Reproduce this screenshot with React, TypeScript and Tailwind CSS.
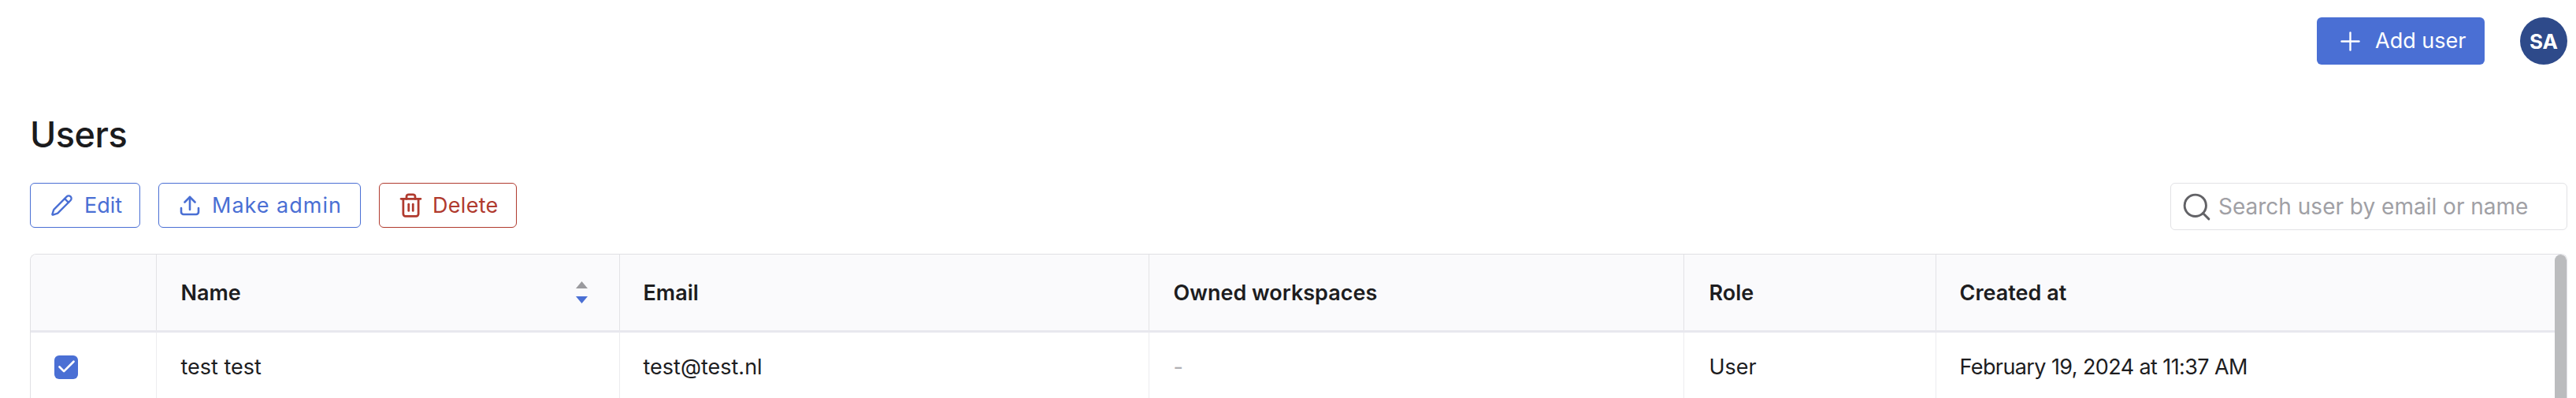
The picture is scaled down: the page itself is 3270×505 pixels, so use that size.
import { Pencil, Trash2, Search, Check } from "lucide-react";

const font = "font-['Inter','Liberation_Sans',sans-serif]";

function Upload() {
  return (
    <svg width="26" height="26" viewBox="0 0 26 26" fill="none" stroke="currentColor" strokeWidth="2.6" strokeLinecap="round" strokeLinejoin="round">
      <path d="M2 16v5a3 3 0 0 0 3 3h16a3 3 0 0 0 3-3v-5" />
      <path d="M13 18V2" />
      <path d="M6.5 8.5 13 2l6.5 6.5" />
    </svg>
  );
}

function PlusIcon() {
  return (
    <svg width="25" height="25" viewBox="0 0 25 25" fill="none" stroke="currentColor" strokeWidth="2.4" strokeLinecap="round">
      <path d="M12.5 1.5v22" />
      <path d="M1.5 12.5h22" />
    </svg>
  );
}

export default function App() {
  return (
    <div className={`${font} h-[505px] w-[3270px] overflow-hidden bg-white pl-[38px] pr-[11px] pt-[22px] text-[#1d1d1f]`}>
      <div className="flex items-center justify-end gap-[45px]">
        <button className="flex h-[60px] w-[213px] items-center gap-[19px] rounded-[6px] bg-[#4a6fd4] pl-[30px] text-[27px] text-white">
          <PlusIcon />
          <span>Add user</span>
        </button>
        <div className="flex h-[60px] w-[60px] items-center justify-center rounded-full bg-[#2e4a8a] text-[26px] font-bold text-white">SA</div>
      </div>

      <h1 className="mt-[63px] h-[52px] text-[45px] font-medium leading-[52px] tracking-[-0.5px] text-[#1b1b1d]">Users</h1>

      <div className="mt-[35px] flex items-start justify-between">
        <div className="flex items-center gap-[23px] text-[27px]">
          <button className="flex h-[57px] w-[140px] items-center gap-[14px] rounded-[6px] border border-[#4a6fd4] pl-[25px] text-[#4a6fd4]">
            <Pencil size={29} strokeWidth={2} />
            <span className="pt-[2px]">Edit</span>
          </button>
          <button className="flex h-[57px] w-[257px] items-center gap-[15px] rounded-[6px] border border-[#4a6fd4] pl-[26px] text-[#4a6fd4]">
            <Upload />
            <span className="pt-[2px] tracking-[1px]">Make admin</span>
          </button>
          <button className="flex h-[57px] w-[175px] items-center gap-[11px] rounded-[6px] border border-[#b03a2e] pl-[23px] text-[#b03a2e]">
            <Trash2 size={33} strokeWidth={2} />
            <span className="pt-[2px] tracking-[0.3px]">Delete</span>
          </button>
        </div>
        <div className="flex h-[60px] w-[504px] items-center gap-[7px] rounded-[6px] border border-[#e2e2e5] pl-[12px] text-[#626266]">
          <Search size={41} strokeWidth={1.7} />
          <span className="whitespace-nowrap text-[28px] text-[#a0a0a5]">Search user by email or name</span>
        </div>
      </div>

      <div className="relative mt-[30px] overflow-hidden rounded-t-[8px] border-x border-t border-[#e0e0e4]">
        <table className="w-full table-fixed border-collapse text-left text-[27px]">
          <colgroup>
            <col className="w-[159px]" />
            <col className="w-[588px]" />
            <col className="w-[672px]" />
            <col className="w-[679px]" />
            <col className="w-[320px]" />
            <col />
          </colgroup>
          <thead>
            <tr className="h-[97px] border-b-[3px] border-[#e8e8ee] bg-[#fafafc] text-[27px] font-semibold">
              <th className="border-r border-[#e3e3e6]"></th>
              <th className="border-r border-[#e3e3e6] pl-[31px] pr-[40px] font-semibold">
                <div className="flex items-center justify-between">
                  <span className="pt-[2px]">Name</span>
                  <svg width="15" height="28" viewBox="0 0 15 28">
                    <path d="M7.5 0 15 9H0z" fill="#9a9a9e" />
                    <path d="M0 19h15l-7.5 9z" fill="#4a6fd4" />
                  </svg>
                </div>
              </th>
              <th className="border-r border-[#e3e3e6] pl-[30px] pt-[2px] font-semibold">Email</th>
              <th className="border-r border-[#e3e3e6] pl-[31px] pt-[2px] font-semibold">Owned workspaces</th>
              <th className="border-r border-[#e3e3e6] pl-[32px] pt-[2px] font-semibold">Role</th>
              <th className="pl-[30px] pt-[2px] font-semibold">Created at</th>
            </tr>
          </thead>
          <tbody>
            <tr className="h-[90px]">
              <td className="border-r border-[#ececef] pl-[30px]">
                <div className="flex h-[30px] w-[30px] items-center justify-center rounded-[6px] bg-[#4a6fd4] text-white">
                  <Check size={27} strokeWidth={2.4} />
                </div>
              </td>
              <td className="border-r border-[#ececef] pl-[31px]">test test</td>
              <td className="border-r border-[#ececef] pl-[30px]">test@test.nl</td>
              <td className="border-r border-[#ececef] pl-[31px] text-[#b0b0b4]">-</td>
              <td className="border-r border-[#ececef] pl-[32px]">User</td>
              <td className="pl-[30px] tracking-[-0.6px]">February 19, 2024 at 11:37 AM</td>
            </tr>
          </tbody>
        </table>
        <div className="absolute bottom-0 right-0 top-0 w-[15px] rounded-t-full bg-[#bbbcbe]" />
      </div>
    </div>
  );
}
